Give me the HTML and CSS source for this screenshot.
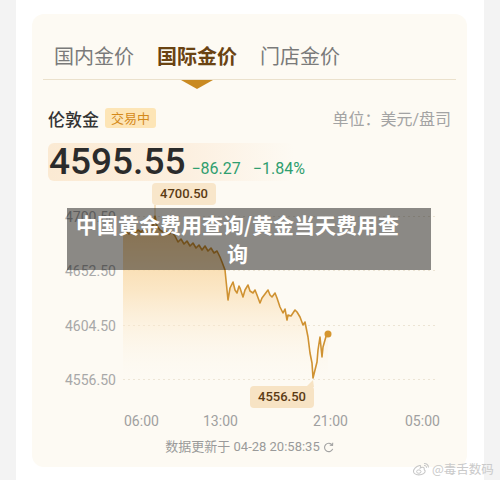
FILE: index.html
```html
<!DOCTYPE html>
<html lang="zh-CN">
<head>
    <meta charset="UTF-8">
    <meta name="viewport" content="width=device-width, initial-scale=1.0">
    <title>国际金价</title>
    <link rel="stylesheet" href="styles.css">
</head>
<body>
    <div class="page">
        <div class="card">
            <div class="tabs">
                <span class="tab">国内金价</span>
                <span class="tab active">国际金价</span>
                <span class="tab">门店金价</span>
            </div>

            <div class="body">
                <div class="quote-head">
                    <div class="name">伦敦金<span class="badge">交易中</span></div>
                    <div class="unit">单位：美元/盘司</div>
                </div>

                <div class="price-row">
                    <span class="price">4595.55</span>
                    <span class="chg">−86.27</span>
                    <span class="chg">−1.84%</span>
                </div>

                <div class="chart">
                    <div class="y-axis">
                        <span>4700.50</span>
                        <span>4652.50</span>
                        <span>4604.50</span>
                        <span>4556.50</span>
                    </div>
                    <svg class="plot" width="312" height="227" viewBox="123 183 312 227">
                        <defs>
                            <linearGradient id="area" gradientUnits="userSpaceOnUse" x1="0" y1="216" x2="0" y2="385">
                                <stop offset="0" stop-color="#f7c983" stop-opacity="0.95"/>
                                <stop offset="0.45" stop-color="#fadfb4" stop-opacity="0.7"/>
                                <stop offset="1" stop-color="#fdfaf3" stop-opacity="0"/>
                            </linearGradient>
                        </defs>
                        <g stroke="#ece4d4" stroke-width="1" stroke-dasharray="2 3">
                            <line x1="123" y1="216.5" x2="435" y2="216.5"/>
                            <line x1="123" y1="270.5" x2="435" y2="270.5"/>
                            <line x1="123" y1="325.5" x2="435" y2="325.5"/>
                            <line x1="123" y1="379.5" x2="435" y2="379.5"/>
                        </g>
                        <path fill="url(#area)" d="M123 233 L126 231 L129 234 L132 231 L135 233 L138 230 L141 232 L144 229 L147 232 L150 229 L153 225 L155 216 L157 226 L160 230 L163 232 L166 231 L169 234 L172 232 L175 236 L178 242 L181 239 L184 244 L187 241 L190 246 L193 243 L196 248 L199 245 L202 250 L205 246 L208 251 L211 248 L214 253 L217 251 L220 257 L222 262 L225 270 L227 290 L228 300 L230 288 L233 282 L235 290 L237 293 L239 286 L240 288 L243 297 L245 290 L248 285 L250 291 L253 293 L255 290 L257 295 L260 303 L262 298 L265 294 L268 290 L270 295 L272 297 L275 293 L277 298 L280 307 L283 313 L285 309 L287 320 L288 315 L291 316 L293 313 L295 310 L297 312 L300 317 L303 325 L305 322 L307 332 L308 337 L310 353 L312 363 L313 378 L315 370 L317 362 L318 350 L320 337 L322 357 L323 347 L325 340 L327 333 L328 334 L328 410 L123 410 Z"/>
                        <path fill="none" stroke="#cf9232" stroke-width="1.6" stroke-linejoin="round" d="M123 233 L126 231 L129 234 L132 231 L135 233 L138 230 L141 232 L144 229 L147 232 L150 229 L153 225 L155 216 L157 226 L160 230 L163 232 L166 231 L169 234 L172 232 L175 236 L178 242 L181 239 L184 244 L187 241 L190 246 L193 243 L196 248 L199 245 L202 250 L205 246 L208 251 L211 248 L214 253 L217 251 L220 257 L222 262 L225 270 L227 290 L228 300 L230 288 L233 282 L235 290 L237 293 L239 286 L240 288 L243 297 L245 290 L248 285 L250 291 L253 293 L255 290 L257 295 L260 303 L262 298 L265 294 L268 290 L270 295 L272 297 L275 293 L277 298 L280 307 L283 313 L285 309 L287 320 L288 315 L291 316 L293 313 L295 310 L297 312 L300 317 L303 325 L305 322 L307 332 L308 337 L310 353 L312 363 L313 378 L315 370 L317 362 L318 350 L320 337 L322 357 L323 347 L325 340 L327 333 L328 334"/>
                        <line x1="155" y1="205" x2="155" y2="216" stroke="#ecc68c" stroke-width="1"/>
                        <polygon points="306,387 313,380 314,387" fill="#f7e3c4"/>
                        <circle cx="328" cy="334" r="3.5" fill="#d5962f"/>
                    </svg>
                    <div class="tip tip-high">4700.50</div>
                    <div class="tip tip-low">4556.50</div>
                </div>

                <div class="x-axis">
                    <span>06:00</span>
                    <span>13:00</span>
                    <span>21:00</span>
                    <span>05:00</span>
                </div>

                <div class="updated">
                    数据更新于 04-28 20:58:35
                    <svg class="refresh" width="11" height="11" viewBox="0 0 12 12">
                        <path d="M10 3.2 A4.6 4.6 0 1 0 10.6 7.5" fill="none" stroke="#a3a3a3" stroke-width="1.2"/>
                        <path d="M10.6 0.8 L10.4 3.8 L7.4 3.4" fill="none" stroke="#a3a3a3" stroke-width="1.2"/>
                    </svg>
                </div>
            </div>
        </div>

        <div class="banner">中国黄金费用查询/黄金当天费用查询</div>

        <div class="watermark">
            <svg width="18" height="14" viewBox="0 0 18 14">
                <path d="M7.5 3.5 C4 4.5 1 7.5 1.5 10 C2 12.5 6 13.5 9.5 12.5 C13 11.5 14 9 12.5 8 C11.8 7.6 12.6 6.4 12 5.8 C11 5 9 5.6 8.3 6 C8.8 4.6 8.8 3.2 7.5 3.5 Z" fill="none" stroke="#c8c8c8" stroke-width="1.1"/>
                <ellipse cx="6.8" cy="9.6" rx="2.2" ry="1.7" fill="none" stroke="#c8c8c8" stroke-width="1"/>
                <path d="M12 1.5 A4 4 0 0 1 16.5 5.5" fill="none" stroke="#c8c8c8" stroke-width="1.1"/>
                <path d="M12 3.5 A2 2 0 0 1 14.5 5.8" fill="none" stroke="#c8c8c8" stroke-width="1"/>
            </svg>
            <span>@毒舌数码</span>
        </div>
    </div>
</body>
</html>
```

FILE: styles.css
```css
body {
    margin: 0;
    background: #f3f3f3;
    font-family: Roboto, "Noto Sans CJK SC", sans-serif;
}
.page {
    position: relative;
    box-sizing: border-box;
    width: 468px;
    height: 480px;
    margin-left: 16px;
    padding: 14px 17px 0 16px;
    background: #fff;
}
.card {
    background: #fdfaf3;
    border-radius: 12px;
    padding: 28px 11px 12px;
}
.tabs {
    display: flex;
    gap: 23px;
    padding: 0 11px 9px;
    border-bottom: 1px solid #ebe1cc;
}
.tab {
    position: relative;
    font-family: "Noto Sans CJK SC", sans-serif;
    font-size: 20px;
    line-height: 28px;
    color: #7a7a7a;
}
.tab.active {
    color: #6a4312;
    font-weight: 700;
}
.tab.active::after {
    content: "";
    position: absolute;
    left: 50%;
    top: 38px;
    margin-left: -16px;
    border-left: 16px solid transparent;
    border-right: 16px solid transparent;
    border-top: 9px solid #c98a22;
}
.body {
    padding: 0 5px;
}
.quote-head {
    display: flex;
    justify-content: space-between;
    align-items: center;
    margin-top: 26px;
    height: 24px;
}
.name {
    display: flex;
    align-items: center;
    font-family: "Noto Sans CJK SC", sans-serif;
    font-size: 17px;
    font-weight: 500;
    color: #333;
}
.badge {
    margin-left: 6px;
    padding: 0 6px;
    height: 20px;
    line-height: 20px;
    font-size: 13px;
    font-weight: 400;
    color: #d4891a;
    background: #fde5b6;
    border-radius: 3px;
}
.unit {
    font-size: 16px;
    color: #a3a3a3;
}
.price-row {
    display: flex;
    align-items: baseline;
    width: 245px;
    height: 38px;
    margin-top: 13px;
    padding-left: 1px;
    border-radius: 6px;
    background: linear-gradient(90deg, #fbead3 0%, #fcefdf 55%, rgba(253, 250, 243, 0) 100%);
}
.price {
    font-size: 37px;
    line-height: 38px;
    font-weight: 500;
    color: #2b2b2b;
}
.chg {
    margin-left: 6px;
    font-size: 16px;
    color: #2f9e6f;
}
.chg + .chg {
    margin-left: 12px;
}
.chart {
    position: relative;
    display: grid;
    grid-template-columns: 58px 312px;
    height: 227px;
    margin: 2px 0 0 17px;
}
.y-axis {
    display: flex;
    flex-direction: column;
    gap: 38.33px;
    padding-top: 26px;
    font-size: 14px;
    line-height: 16px;
    color: #a8a8a8;
}
.plot {
    display: block;
}
.tip {
    position: absolute;
    width: 64px;
    height: 22px;
    line-height: 22px;
    text-align: center;
    font-size: 13px;
    font-weight: 500;
    color: #5b3b14;
    background: #f8e6ca;
    border-radius: 4px;
}
.tip-high {
    left: 87px;
    top: 0;
}
.tip-low {
    left: 185px;
    top: 203px;
    background: #f7e3c4;
}
.x-axis {
    display: grid;
    grid-template-columns: 79px 110px 92px auto;
    margin: 3px 0 0 76px;
    font-size: 14px;
    line-height: 16px;
    color: #a0a0a0;
}
.updated {
    display: flex;
    justify-content: center;
    align-items: center;
    gap: 3px;
    margin-top: 10px;
    font-size: 13px;
    line-height: 16px;
    color: #9a9a9a;
}
.banner {
    position: absolute;
    left: 51px;
    top: 208px;
    box-sizing: border-box;
    width: 364px;
    height: 62px;
    padding: 2px 29px 0 6px;
    background: rgba(0, 0, 0, 0.45);
    color: #fff;
    font-family: "Noto Sans CJK SC", sans-serif;
    font-size: 21px;
    font-weight: 700;
    line-height: 29px;
    text-align: center;
}
.watermark {
    position: absolute;
    left: 396px;
    top: 461px;
    display: flex;
    align-items: center;
    gap: 2px;
    font-family: "Noto Sans CJK SC", sans-serif;
    font-size: 12.5px;
    line-height: 16px;
    color: #cacaca;
    white-space: nowrap;
}
```
